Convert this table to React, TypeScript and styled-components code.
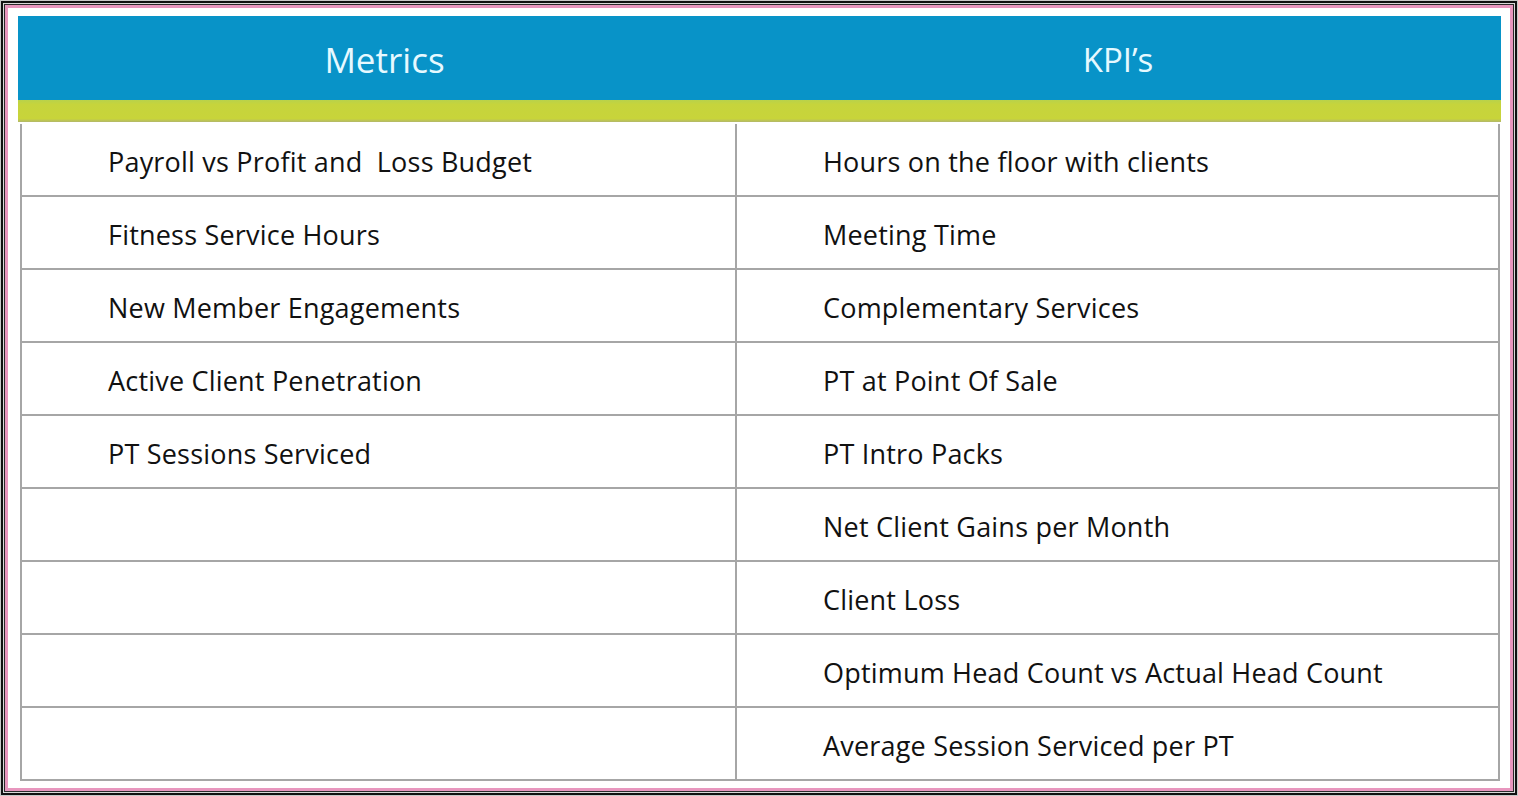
import React from "react";
import styled, { createGlobalStyle } from "styled-components";

const Global = createGlobalStyle`
  html, body { margin: 0; padding: 0; background: #fff; }
  body { font-family: "Open Sans", "Noto Sans", sans-serif; }
`;

const F1 = styled.div`
  width: 1518px;
  height: 796px;
  box-sizing: border-box;
  border: 1px solid #c9c9c9;
`;
const F2 = styled.div`
  height: 100%;
  box-sizing: border-box;
  border: 2px solid #111;
`;
const F3 = styled.div`
  height: 100%;
  box-sizing: border-box;
  border: 1px solid #d9d9d9;
`;
const F4 = styled.div`
  height: 100%;
  box-sizing: border-box;
  border: 1px solid #2a2a2a;
`;
const F5 = styled.div`
  height: 100%;
  box-sizing: border-box;
  border: 3px solid #e896be;
`;
const Inner = styled.div`
  height: 100%;
  box-sizing: border-box;
  background: #fff;
  padding: 8px 9px 5px 10px;
  display: flex;
  flex-direction: column;
`;

const Header = styled.div`
  display: grid;
  grid-template-columns: 733px 1fr;
  height: 84px;
  background: #0893c8;
`;
const HeadCell = styled.div<{ $shift?: number }>`
  display: flex;
  align-items: center;
  justify-content: center;
  color: #e6f9ff;
  font-family: "Open Sans", sans-serif;
  font-size: 35px;
  padding-top: 2px;
  padding-right: ${(p) => p.$shift ?? 0}px;
`;
const KpiTitle = styled.span`
  font-size: 33px;
`;
const Band = styled.div`
  height: 22px;
  background: linear-gradient(#b9d24a, #c6d43c 20%, #c8d43a 85%, #b3b86a);
`;
const Table = styled.div`
  margin: 2px 1px 0 2px;
  display: grid;
  grid-template-columns: 713px 1fr;
  grid-auto-rows: 73px;
  border-left: 2px solid #a6a6a6;
  border-right: 2px solid #a6a6a6;
`;
const Cell = styled.div<{ $right?: boolean }>`
  display: flex;
  align-items: center;
  padding-left: 86px;
  padding-top: 4px;
  border-bottom: 2px solid #a6a6a6;
  border-left: ${(p) => (p.$right ? "2px solid #a6a6a6" : "none")};
  font-size: 27px;
  letter-spacing: 0.2px;
  color: #111;
  white-space: pre;
`;

const metrics = [
  "Payroll vs Profit and  Loss Budget",
  "Fitness Service Hours",
  "New Member Engagements",
  "Active Client Penetration",
  "PT Sessions Serviced",
  "",
  "",
  "",
  "",
];
const kpis = [
  "Hours on the floor with clients",
  "Meeting Time",
  "Complementary Services",
  "PT at Point Of Sale",
  "PT Intro Packs",
  "Net Client Gains per Month",
  "Client Loss",
  "Optimum Head Count vs Actual Head Count",
  "Average Session Serviced per PT",
];

export default function App() {
  return (
    <>
      <Global />
      <F1>
        <F2>
          <F3>
            <F4>
              <F5>
                <Inner>
                  <Header>
                    <HeadCell>Metrics</HeadCell>
                    <HeadCell $shift={16}>
                      <KpiTitle>KPI’s</KpiTitle>
                    </HeadCell>
                  </Header>
                  <Band />
                  <Table>
                    {metrics.map((m, i) => (
                      <React.Fragment key={i}>
                        <Cell>{m}</Cell>
                        <Cell $right>{kpis[i]}</Cell>
                      </React.Fragment>
                    ))}
                  </Table>
                </Inner>
              </F5>
            </F4>
          </F3>
        </F2>
      </F1>
    </>
  );
}
